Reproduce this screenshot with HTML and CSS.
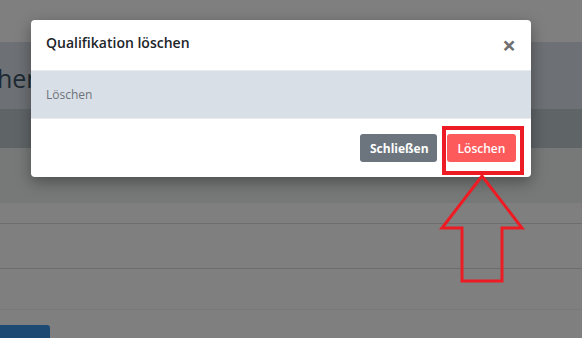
FILE: index.html
```html
<!DOCTYPE html>
<html lang="de">
<head>
<meta charset="utf-8">
<title>Qualifikation löschen</title>
<link rel="stylesheet" href="styles.css">
</head>
<body>
<div class="page">
  <div class="top-gap"></div>
  <div class="page-head"><h1 class="page-title">hen</h1></div>
  <div class="sub-band"></div>
  <div class="shade-band"></div>
  <div class="row row-a"></div>
  <div class="row row-b"></div>
  <div class="row row-c"></div>
  <div class="row row-d"><span class="blue-btn"></span></div>
</div>

<div class="modal">
  <div class="modal-header">
    <h5 class="modal-title">Qualifikation löschen</h5>
    <span class="close">&times;</span>
  </div>
  <div class="modal-body">Löschen</div>
  <div class="modal-footer">
    <button class="btn btn-secondary">Schließen</button>
    <button class="btn btn-danger">Löschen</button>
  </div>
</div>

<div class="highlight"></div>
<svg class="arrow" width="100" height="120" viewBox="0 0 100 120">
  <polygon points="52,6 12,58 32,58 32,111 72,111 72,58 92,58" fill="none" stroke="#ed1c24" stroke-width="3" stroke-linejoin="miter"/>
</svg>
</body>
</html>
```

FILE: styles.css
```css
html, body {
  margin: 0;
  padding: 0;
}
body {
  width: 582px;
  height: 338px;
  overflow: hidden;
  position: relative;
  background: #7f7f7f;
  font-family: "Open Sans", "Noto Sans", sans-serif;
}
.page {
  display: flex;
  flex-direction: column;
}
.top-gap {
  height: 42px;
  background: #7f7f7f;
}
.page-head {
  height: 67px;
  background: #6d7074;
  overflow: hidden;
}
.page-title {
  margin: 0;
  margin-left: -3px;
  margin-top: 20px;
  font-size: 25px;
  line-height: 32px;
  font-weight: 400;
  color: #1d2a33;
}
.sub-band {
  height: 39px;
  background: #5f6467;
}
.shade-band {
  height: 55px;
  background: #777878;
}
.row {
  background: #7f7f7f;
}
.row-a {
  height: 20px;
  border-bottom: 1px solid #6d6d6d;
}
.row-b {
  height: 44px;
  border-bottom: 1px solid #6d6d6d;
}
.row-c {
  height: 40px;
  border-bottom: 1px solid #787878;
}
.row-d {
  height: 13px;
  padding-top: 15px;
}
.blue-btn {
  display: block;
  width: 50px;
  height: 13px;
  background: #1c4a73;
  border-radius: 0 3px 0 0;
}

.modal {
  position: absolute;
  left: 31px;
  top: 20px;
  width: 500px;
  background: #fff;
  border-radius: 4px;
  box-shadow: 0 5px 15px rgba(0, 0, 0, 0.35);
  overflow: hidden;
  display: flex;
  flex-direction: column;
}
.modal-header {
  height: 51px;
  box-sizing: border-box;
  padding: 0 15px 0 15px;
  display: flex;
  align-items: center;
  justify-content: space-between;
  border-bottom: 1px solid #e9ecef;
}
.modal-title {
  margin: 0;
  margin-top: -5px;
  font-size: 14px;
  font-weight: 600;
  color: #212529;
}
.close {
  font-size: 24px;
  font-weight: 700;
  line-height: 1;
  color: #707070;
  margin-top: 0;
}
.modal-body {
  height: 48px;
  box-sizing: border-box;
  background: #d9dfe6;
  padding: 0 15px;
  display: flex;
  align-items: center;
  font-size: 12px;
  color: #6c737a;
  border-bottom: 1px solid #e9ecef;
}
.modal-footer {
  height: 58px;
  box-sizing: border-box;
  padding: 0 15px;
  display: flex;
  align-items: center;
  justify-content: flex-end;
  gap: 10px;
}
.btn {
  height: 28px;
  border: 0;
  border-radius: 3px;
  color: #fff;
  font-family: "Open Sans", "Noto Sans", sans-serif;
  font-size: 12px;
  font-weight: 600;
  padding: 0 10px;
}
.btn-secondary {
  width: 77px;
  background: #6c757d;
  font-weight: 700;
}
.btn-danger {
  width: 69px;
  background: #fd5b5b;
}
.highlight {
  position: absolute;
  left: 442px;
  top: 126px;
  width: 74px;
  height: 41px;
  border: 4px solid #ed1c24;
}
.arrow {
  position: absolute;
  left: 430px;
  top: 170px;
}
```
